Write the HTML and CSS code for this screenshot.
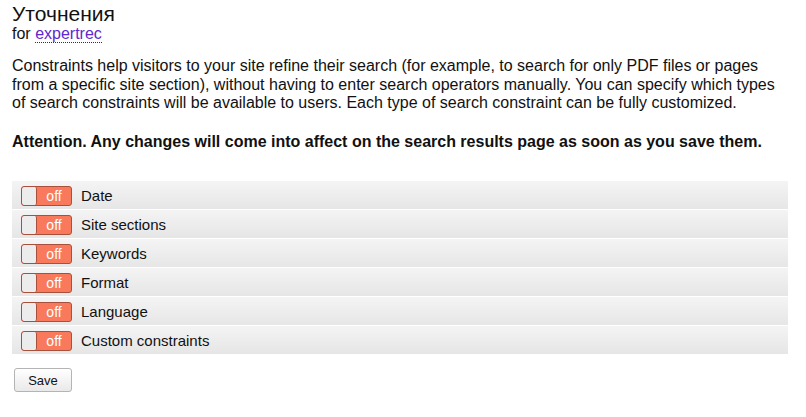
FILE: index.html
```html
<!DOCTYPE html>
<html lang="en">
<head>
<meta charset="utf-8">
<title>Уточнения</title>
<link rel="stylesheet" href="styles.css">
</head>
<body>
<div class="page">
  <h1 class="title">Уточнения</h1>
  <div class="for-line">for <a class="site-link" href="#">expertrec</a></div>
  <p class="intro">Constraints help visitors to your site refine their search (for example, to search for only PDF files or pages from a specific site section), without having to enter search operators manually. You can specify which types of search constraints will be available to users. Each type of search constraint can be fully customized.</p>
  <p class="attention">Attention. Any changes will come into affect on the search results page as soon as you save them.</p>
  <div class="list">
    <div class="row"><span class="toggle"><span class="knob"></span><span class="state">off</span></span><span class="label">Date</span></div>
    <div class="row"><span class="toggle"><span class="knob"></span><span class="state">off</span></span><span class="label">Site sections</span></div>
    <div class="row"><span class="toggle"><span class="knob"></span><span class="state">off</span></span><span class="label">Keywords</span></div>
    <div class="row"><span class="toggle"><span class="knob"></span><span class="state">off</span></span><span class="label">Format</span></div>
    <div class="row"><span class="toggle"><span class="knob"></span><span class="state">off</span></span><span class="label">Language</span></div>
    <div class="row"><span class="toggle"><span class="knob"></span><span class="state">off</span></span><span class="label">Custom constraints</span></div>
  </div>
  <div class="actions"><button class="save-btn" type="button">Save</button></div>
</div>
</body>
</html>
```
FILE: styles.css
```css
html, body {
  margin: 0;
  padding: 0;
  background: #fff;
}
body {
  font-family: "Liberation Sans", Arial, sans-serif;
  color: #111;
}
.page {
  padding: 2px 18px 0 12px;
}
.title {
  margin: 0;
  font-size: 21px;
  font-weight: normal;
  line-height: 23px;
  color: #111;
}
.for-line {
  font-size: 16px;
  line-height: 18px;
}
.site-link {
  color: #6128cf;
  text-decoration: none;
  border-bottom: 1px dotted #3a1a9a;
}
.intro {
  margin: 14px 0 0;
  font-size: 16px;
  line-height: 18.5px;
}
.attention {
  margin: 20px 0 0;
  font-size: 16px;
  line-height: 18.5px;
  font-weight: bold;
}
.list {
  margin-top: 30px;
  display: flex;
  flex-direction: column;
  gap: 1px;
}
.row {
  height: 28px;
  box-sizing: border-box;
  padding: 5px 0 0 9px;
  display: flex;
  align-items: flex-start;
  background: linear-gradient(#f4f4f4, #e6e6e6);
}
.toggle {
  box-sizing: border-box;
  width: 51px;
  height: 20px;
  border: 1px solid #a9503c;
  border-radius: 3px;
  background: #f8795b;
  display: flex;
  overflow: hidden;
}
.knob {
  width: 14px;
  height: 100%;
  background: #ececec;
  border-right: 1px solid #a9503c;
  border-radius: 2px;
}
.state {
  flex: 1;
  text-align: center;
  color: #fff;
  font-size: 14px;
  line-height: 18px;
}
.label {
  margin-left: 9px;
  font-size: 15px;
  line-height: 19px;
  color: #111;
}
.actions {
  margin-top: 14px;
}
.save-btn {
  margin: 0 0 0 2px;
  height: 24px;
  width: 58px;
  padding: 0;
  font-family: "Liberation Sans", Arial, sans-serif;
  font-size: 13px;
  color: #111;
  border: 1px solid #b4b4b4;
  border-radius: 3px;
  background: linear-gradient(#ffffff, #e9e9e9);
}
```
